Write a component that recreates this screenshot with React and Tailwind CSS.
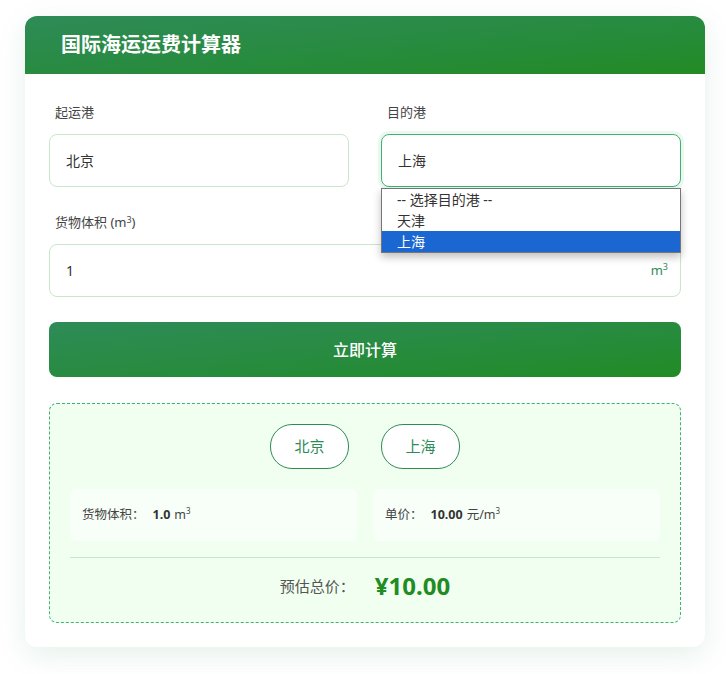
import React from "react";

const font = { fontFamily: '"Noto Sans", "Noto Sans CJK SC", sans-serif' };

const Field = ({ label, children, className = "" }) => (
  <div className={className}>
    <div className="text-[13px] leading-5 text-[#444] mb-3 pl-1.5">{label}</div>
    {children}
  </div>
);

const App = () => {
  return (
    <div className="min-h-screen bg-white pt-4 px-[25px] pb-7" style={font}>
      <div className="w-[680px] bg-white rounded-xl shadow-[0_8px_28px_rgba(46,139,87,0.12)]">
        {/* Header */}
        <div className="h-[58px] rounded-t-xl bg-gradient-to-br from-[#2e8b57] to-[#228b22] flex items-center px-9">
          <h1 className="text-white text-[20px] font-bold">国际海运运费计算器</h1>
        </div>

        <div className="px-6 pt-7 pb-6">
          {/* Ports */}
          <div className="grid grid-cols-2 gap-8 mb-[25px]">
            <Field label="起运港">
              <div className="h-[53px] border border-[#c8e6c9] rounded-lg px-4 flex items-center text-[14px] text-[#333]">
                北京
              </div>
            </Field>
            <Field label="目的港">
              <div className="relative">
                <div className="h-[53px] border border-[#3cb371] rounded-lg px-4 flex items-center text-[14px] text-[#333] shadow-[0_0_0_3px_rgba(60,179,113,0.1)]">
                  上海
                </div>
                {/* open native option list */}
                <div className="absolute left-0 top-[54px] w-[300px] bg-white border border-[#767676] shadow-[0_4px_8px_rgba(0,0,0,0.25)] text-[14px] leading-[21px] text-[#333] z-10">
                  <div className="pl-[15px]">-- 选择目的港 --</div>
                  <div className="pl-[15px]">天津</div>
                  <div className="pl-[15px] bg-[#1a67d2] text-white">上海</div>
                </div>
              </div>
            </Field>
          </div>

          {/* Volume */}
          <Field label={<span>货物体积 (m<sup className="text-[9px]">3</sup>)</span>} className="mb-[25px]">
            <div className="h-[53px] border border-[#c8e6c9] rounded-lg pl-4 pr-3 flex items-center justify-between text-[14px] text-[#333]">
              <span>1</span>
              <span className="text-[13px] text-[#2e8b57]">
                m<sup className="text-[9px]">3</sup>
              </span>
            </div>
          </Field>

          {/* Button */}
          <button className="w-full h-[55px] rounded-lg bg-gradient-to-br from-[#2e8b57] to-[#228b22] text-white text-[16px] font-medium">
            立即计算
          </button>

          {/* Result */}
          <div className="mt-[26px] border border-dashed border-[#3cb371] rounded-lg bg-[#f0fff0] px-5 pt-5 pb-5">
            <div className="flex justify-center gap-8">
              <div className="h-[45px] w-[79px] rounded-[22px] border border-[#2e8b57] bg-white flex items-center justify-center text-[15px] text-[#2e8b57]">
                北京
              </div>
              <div className="h-[45px] w-[79px] rounded-[22px] border border-[#2e8b57] bg-white flex items-center justify-center text-[15px] text-[#2e8b57]">
                上海
              </div>
            </div>

            <div className="grid grid-cols-2 gap-4 mt-5">
              <div className="h-[52px] rounded-md bg-[#f8fff8] px-3 flex items-center text-[12.5px] text-[#444]">
                货物体积：
                <b className="ml-2 mr-1 text-[#333]">1.0</b> m<sup className="text-[8px]">3</sup>
              </div>
              <div className="h-[52px] rounded-md bg-[#f8fff8] px-3 flex items-center text-[12.5px] text-[#444]">
                单价：
                <b className="ml-2 mr-1 text-[#333]">10.00</b> 元/m<sup className="text-[8px]">3</sup>
              </div>
            </div>

            <div className="border-t border-[#c8e6c9] mt-4 pt-3 flex items-center justify-center gap-5">
              <span className="text-[15px] text-[#555]">预估总价：</span>
              <span className="text-[24px] leading-8 font-bold text-[#228b22]">¥10.00</span>
            </div>
          </div>
        </div>
      </div>
    </div>
  );
};

export default App;
